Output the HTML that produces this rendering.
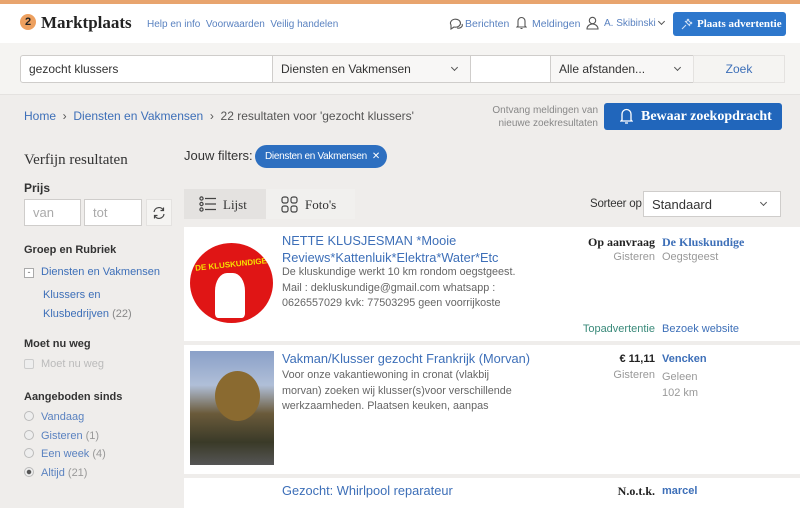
<!DOCTYPE html>
<html><head><meta charset="utf-8"><style>
*{box-sizing:border-box;margin:0;padding:0}
body{width:800px;height:498px;overflow:hidden;background:#efedeb;font-family:"Liberation Sans",sans-serif;position:relative;color:#333}
.a{position:absolute;white-space:nowrap}
.blue{color:#3d6fb8}
.serif{font-family:"Liberation Serif",serif}
.inp{position:absolute;background:#fff;border:1px solid #cfcdcb;font-size:12px;color:#333;padding-left:8px;display:flex;align-items:center;white-space:nowrap}
.chev{position:absolute;width:6px;height:6px;border-right:1.2px solid #555;border-bottom:1.2px solid #555;transform:rotate(45deg)}
.card{position:absolute;left:184px;width:616px;background:#fff}
.t{font-size:12.8px;color:#3d6fb8;line-height:17px}
.d{font-size:10.8px;color:#666;line-height:15.5px}
.g{color:#999;font-size:11px}
.rad{position:absolute;left:24px;width:10px;height:10px;border:1px solid #bbb;border-radius:50%;background:#eee}
.sl{position:absolute;left:41px;font-size:11px;color:#5a82c0}
</style></head><body>
<div class="a" style="left:0;top:0;width:800px;height:4px;background:#e8a46e"></div>
<div class="a" style="left:0;top:4px;width:800px;height:39px;background:#fff"></div>
<div class="a" style="left:20px;top:14px;width:16px;height:16px;border-radius:50%;background:#eda05f;color:#222;font-size:11px;font-weight:bold;text-align:center;line-height:16px">2</div>
<div class="a serif" style="left:41px;top:13px;font-size:17px;font-weight:bold;color:#222">Marktplaats</div>
<div class="a" style="left:147px;top:19px;font-size:10px;color:#5a82c0">Help en info &nbsp;Voorwaarden &nbsp;Veilig handelen</div>
<svg class="a" style="left:449px;top:17px" width="14" height="13" viewBox="0 0 14 13"><path d="M2 8 A5 4 0 1 1 5 10 L2 12 Z M8 11 A4 3 0 0 0 13 7" fill="none" stroke="#555" stroke-width="1.1"/></svg>
<div class="a" style="left:465px;top:18px;font-size:10.5px;color:#5a82c0">Berichten</div>
<svg class="a" style="left:516px;top:16px" width="11" height="14" viewBox="0 0 11 14"><path d="M2 10 L2 5 A3.5 3.5 0 0 1 9 5 L9 10 L10 11 L1 11 Z M4.5 12.5 L6.5 12.5" fill="none" stroke="#555" stroke-width="1.1"/></svg>
<div class="a" style="left:532px;top:18px;font-size:10.5px;color:#5a82c0">Meldingen</div>
<svg class="a" style="left:586px;top:16px" width="13" height="14" viewBox="0 0 13 14"><circle cx="6.5" cy="4.5" r="3.2" fill="none" stroke="#555" stroke-width="1.1"/><path d="M1 13 A5.5 5 0 0 1 12 13 Z" fill="none" stroke="#555" stroke-width="1.1"/></svg>
<div class="a" style="left:604px;top:18px;font-size:10px;color:#5a82c0">A. Skibinski</div>
<div class="chev" style="left:659px;top:19px;width:5px;height:5px"></div>
<div class="a" style="left:673px;top:12px;width:113px;height:24px;background:#2d77cc;border-radius:3px;color:#fff;font-size:11px;font-weight:bold;font-family:'Liberation Serif',serif;line-height:24px;padding-left:24px">Plaats advertentie</div>
<svg class="a" style="left:681px;top:17px" width="13" height="13" viewBox="0 0 13 13"><path d="M1 12 L5 8 M4 4 L9 9 M6 2 L11 7 M5 5 L8 2 M8 8 L11 5" stroke="#cfe0f5" stroke-width="1.1" fill="none"/></svg>
<div class="a" style="left:0;top:43px;width:800px;height:52px;background:#f5f4f2;border-bottom:1px solid #e4e2e0"></div>
<div class="inp" style="left:20px;top:55px;width:253px;height:28px;border-radius:3px 0 0 3px">gezocht klussers</div>
<div class="inp" style="left:272px;top:55px;width:199px;height:28px;background:#f8f7f6">Diensten en Vakmensen</div>
<div class="chev" style="left:452px;top:65px;width:5px;height:5px"></div>
<div class="inp" style="left:470px;top:55px;width:81px;height:28px"></div>
<div class="inp" style="left:550px;top:55px;width:144px;height:28px;background:#f8f7f6">Alle afstanden...</div>
<div class="chev" style="left:675px;top:65px;width:5px;height:5px"></div>
<div class="inp" style="left:693px;top:55px;width:92px;height:28px;background:#f5f4f2;justify-content:center;padding:0;color:#3d6fb8;border-color:#e4e2e0">Zoek</div>
<div class="a" style="left:24px;top:109px;font-size:12px;color:#555"><span class="blue">Home</span> &nbsp;›&nbsp; <span class="blue">Diensten en Vakmensen</span> &nbsp;›&nbsp; 22 resultaten voor 'gezocht klussers'</div>
<div class="a" style="left:490px;top:104px;width:108px;font-size:10px;color:#888;text-align:right;line-height:13px;white-space:normal">Ontvang meldingen van nieuwe zoekresultaten</div>
<div class="a" style="left:604px;top:103px;width:178px;height:27px;background:#2166bb;border-radius:3px;color:#fff;font-size:14px;font-weight:bold;font-family:'Liberation Serif',serif;line-height:27px;padding-left:37px">Bewaar zoekopdracht</div>
<svg class="a" style="left:620px;top:108px" width="13" height="16" viewBox="0 0 13 16"><path d="M2 12 L2 6 A4.5 4.5 0 0 1 11 6 L11 12 L12 13 L1 13 Z M5 15 L8 15" fill="none" stroke="#fff" stroke-width="1.3"/></svg>
<div class="a serif" style="left:24px;top:152px;font-size:15px;color:#333">Verfijn resultaten</div>
<div class="a" style="left:24px;top:181px;font-size:12px;font-weight:bold;color:#333">Prijs</div>
<div class="inp" style="left:24px;top:199px;width:57px;height:27px;color:#aaa;font-size:13px">van</div>
<div class="inp" style="left:84px;top:199px;width:58px;height:27px;color:#aaa;font-size:13px">tot</div>
<div class="inp" style="left:146px;top:199px;width:26px;height:27px;background:#f5f4f2;border-color:#e4e2e0;padding:0;justify-content:center"><svg width="14" height="14" viewBox="0 0 14 14"><path d="M2 6 A5 5 0 0 1 11.5 4.5 M12 8 A5 5 0 0 1 2.5 9.5 M11.5 1.5 L11.5 4.5 L8.5 4.5 M2.5 12.5 L2.5 9.5 L5.5 9.5" fill="none" stroke="#444" stroke-width="1.2"/></svg></div>
<div class="a" style="left:24px;top:244px;font-size:11px;font-weight:bold;color:#333">Groep en Rubriek</div>
<div class="a" style="left:24px;top:268px;width:10px;height:10px;border:1px solid #aaa;background:#fff;font-size:9px;line-height:7px;text-align:center;color:#666">-</div>
<div class="a" style="left:41px;top:266px;font-size:11px;color:#3d6fb8">Diensten en Vakmensen</div>
<div class="a" style="left:43px;top:286px;font-size:11px;color:#3d6fb8;line-height:19px">Klussers en<br>Klusbedrijven <span style="color:#888">(22)</span></div>
<div class="a" style="left:24px;top:338px;font-size:11px;font-weight:bold;color:#333">Moet nu weg</div>
<div class="a" style="left:24px;top:359px;width:10px;height:10px;border:1px solid #ccc;border-radius:2px;background:#eee"></div>
<div class="a" style="left:41px;top:358px;font-size:11px;color:#bbb">Moet nu weg</div>
<div class="a" style="left:24px;top:391px;font-size:11px;font-weight:bold;color:#333">Aangeboden sinds</div>
<div class="rad" style="top:411px"></div><div class="sl" style="top:411px">Vandaag</div>
<div class="rad" style="top:430px"></div><div class="sl" style="top:430px">Gisteren <span style="color:#999">(1)</span></div>
<div class="rad" style="top:448px"></div><div class="sl" style="top:448px">Een week <span style="color:#999">(4)</span></div>
<div class="rad" style="top:467px;background:radial-gradient(circle,#555 2px,#eee 2.5px)"></div><div class="sl" style="top:467px">Altijd <span style="color:#999">(21)</span></div>
<div class="a" style="left:184px;top:148px;font-size:13px;color:#333">Jouw filters:</div>
<div class="a" style="left:255px;top:145px;width:132px;height:23px;background:#2d6fc0;border-radius:12px;color:#fff;font-size:10px;line-height:23px;padding-left:10px;letter-spacing:-0.3px">Diensten en Vakmensen &nbsp;✕</div>
<div class="a" style="left:184px;top:189px;width:82px;height:30px;background:#e4e2e0"></div>
<div class="a" style="left:266px;top:189px;width:89px;height:30px;background:#f1f0ee"></div>
<svg class="a" style="left:199px;top:196px" width="18" height="16" viewBox="0 0 18 16"><g fill="none" stroke="#444" stroke-width="1.2"><circle cx="2.5" cy="2.5" r="1.6"/><circle cx="2.5" cy="8" r="1.6"/><circle cx="2.5" cy="13.5" r="1.6"/><path d="M6 2.5H17M6 8H17M6 13.5H17"/></g></svg>
<div class="a serif" style="left:223px;top:197px;font-size:13px;color:#333">Lijst</div>
<svg class="a" style="left:281px;top:196px" width="17" height="17" viewBox="0 0 17 17"><g fill="none" stroke="#444" stroke-width="1.2"><rect x="1" y="1" width="6" height="6" rx="2"/><rect x="10" y="1" width="6" height="6" rx="2"/><rect x="1" y="10" width="6" height="6" rx="2"/><rect x="10" y="10" width="6" height="6" rx="2"/></g></svg>
<div class="a serif" style="left:305px;top:197px;font-size:13px;color:#333">Foto's</div>
<div class="a" style="left:590px;top:198px;font-size:11.5px;color:#333;letter-spacing:-0.2px">Sorteer op</div>
<div class="inp" style="left:643px;top:191px;width:138px;height:26px;font-size:13px">Standaard</div>
<div class="chev" style="left:761px;top:200px;width:5px;height:5px"></div>

<div class="card" style="top:227px;height:114px"></div>
<div class="a" style="left:190px;top:243px;width:83px;height:80px;border-radius:50%;background:#e01515;overflow:hidden"><div style="position:absolute;left:5px;top:17px;font-size:8px;font-weight:bold;color:#f5e000;transform:rotate(-6deg)">DE KLUSKUNDIGE</div><div style="position:absolute;left:25px;top:30px;width:30px;height:45px;background:#fff;border-radius:40% 40% 10% 10%"></div></div>
<div class="a t" style="left:282px;top:232px">NETTE KLUSJESMAN *Mooie<br>Reviews*Kattenluik*Elektra*Water*Etc</div>
<div class="a d" style="left:282px;top:265px">De kluskundige werkt 10 km rondom oegstgeest.<br>Mail : dekluskundige@gmail.com whatsapp :<br>0626557029 kvk: 77503295 geen voorrijkoste</div>
<div class="a serif" style="left:560px;top:235px;width:95px;text-align:right;font-size:12px;font-weight:bold;color:#222">Op aanvraag</div>
<div class="a serif" style="left:662px;top:235px;font-size:12px;font-weight:bold;color:#3d6fb8">De Kluskundige</div>
<div class="a g" style="left:560px;top:251px;width:95px;text-align:right">Gisteren</div>
<div class="a g" style="left:662px;top:251px">Oegstgeest</div>
<div class="a" style="left:560px;top:323px;width:95px;text-align:right;font-size:11px;color:#3a8a7a">Topadvertentie</div>
<div class="a" style="left:662px;top:323px;font-size:11px;color:#3d6fb8">Bezoek website</div>

<div class="card" style="top:345px;height:129px"></div>
<div class="a" style="left:190px;top:351px;width:84px;height:114px;background:linear-gradient(180deg,#8aa0c8 0%,#b0bfd8 30%,#6a5a3a 55%,#3a3a28 80%,#555 100%)"><div style="position:absolute;left:25px;top:20px;width:45px;height:50px;border-radius:50%;background:#8a6a30"></div></div>
<div class="a t" style="left:282px;top:350px">Vakman/Klusser gezocht Frankrijk (Morvan)</div>
<div class="a d" style="left:282px;top:368px">Voor onze vakantiewoning in cronat (vlakbij<br>morvan) zoeken wij klusser(s)voor verschillende<br>werkzaamheden. Plaatsen keuken, aanpas</div>
<div class="a" style="left:560px;top:353px;width:95px;text-align:right;font-size:11px;font-weight:bold;color:#222">€ 11,11</div>
<div class="a" style="left:662px;top:353px;font-size:11px;font-weight:bold;color:#3d6fb8">Vencken</div>
<div class="a g" style="left:560px;top:369px;width:95px;text-align:right">Gisteren</div>
<div class="a g" style="left:662px;top:369px;line-height:16px">Geleen<br>102 km</div>

<div class="card" style="top:478px;height:30px"></div>
<div class="a t" style="left:282px;top:482px">Gezocht: Whirlpool reparateur</div>
<div class="a serif" style="left:560px;top:484px;width:95px;text-align:right;font-size:12px;font-weight:bold;color:#222">N.o.t.k.</div>
<div class="a" style="left:662px;top:485px;font-size:11px;font-weight:bold;color:#3d6fb8">marcel</div>
</body></html>
